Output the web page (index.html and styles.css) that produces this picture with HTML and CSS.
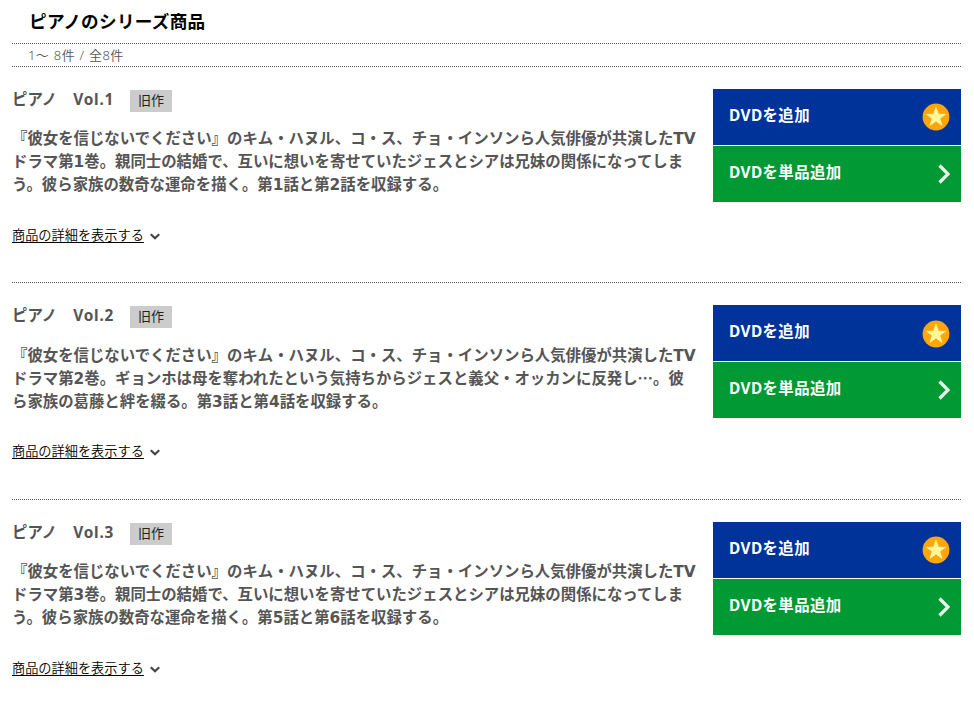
FILE: index.html
```
<!DOCTYPE html>
<html lang="ja">
<head>
    <meta charset="UTF-8">
    <meta name="viewport" content="width=device-width, initial-scale=1.0">
    <title>ピアノのシリーズ商品</title>
    <link rel="stylesheet" href="styles.css">
</head>
<body>
    <!-- shared icons -->
    <svg class="defs" width="0" height="0">
        <symbol id="star" viewBox="0 0 28 28">
            <circle cx="14" cy="14" r="13.4" fill="#ffa60d"/>
            <path d="M14 3.600l2.700 7.200 7.600.1-6 4.700 2.200 7.300-6.500-4.300-6.500 4.300 2.200-7.300-6-4.700 7.600-.1z" fill="#fff799"/>
        </symbol>
        <symbol id="next" viewBox="0 0 12 20">
            <path d="M1.500 1.500L10 10l-8.500 8.500" fill="none" stroke="#e9f6ec" stroke-width="3.200"/>
        </symbol>
        <symbol id="down" viewBox="0 0 10 7">
            <path d="M.8 1.200L5 5.200l4.200-4" fill="none" stroke="#444" stroke-width="2.200"/>
        </symbol>
    </svg>

    <div id="main">
        <h2>ピアノのシリーズ商品</h2>
        <p class="count">1～ 8件 / 全8件</p>

        <div class="item">
            <div class="info">
                <h3><span class="name">ピアノ　<span class="vol">Vol.1</span></span><span class="tag">旧作</span></h3>
                <p class="text">『彼女を信じないでください』のキム・ハヌル、コ・ス、チョ・インソンら人気俳優が共演したTV<br>ドラマ第1巻。親同士の結婚で、互いに想いを寄せていたジェスとシアは兄妹の関係になってしま<br>う。彼ら家族の数奇な運命を描く。第1話と第2話を収録する。</p>
                <p class="more"><a href="#">商品の詳細を表示する</a><svg class="down"><use href="#down"/></svg></p>
            </div>
            <div class="buttons">
                <a href="#" class="add">DVDを追加<svg class="star"><use href="#star"/></svg></a>
                <a href="#" class="single">DVDを単品追加<svg class="next"><use href="#next"/></svg></a>
            </div>
        </div>

        <div class="item">
            <div class="info">
                <h3><span class="name">ピアノ　<span class="vol">Vol.2</span></span><span class="tag">旧作</span></h3>
                <p class="text">『彼女を信じないでください』のキム・ハヌル、コ・ス、チョ・インソンら人気俳優が共演したTV<br>ドラマ第2巻。ギョンホは母を奪われたという気持ちからジェスと義父・オッカンに反発し<span class="dots">…</span>。彼<br>ら家族の葛藤と絆を綴る。第3話と第4話を収録する。</p>
                <p class="more"><a href="#">商品の詳細を表示する</a><svg class="down"><use href="#down"/></svg></p>
            </div>
            <div class="buttons">
                <a href="#" class="add">DVDを追加<svg class="star"><use href="#star"/></svg></a>
                <a href="#" class="single">DVDを単品追加<svg class="next"><use href="#next"/></svg></a>
            </div>
        </div>

        <div class="item">
            <div class="info">
                <h3><span class="name">ピアノ　<span class="vol">Vol.3</span></span><span class="tag">旧作</span></h3>
                <p class="text">『彼女を信じないでください』のキム・ハヌル、コ・ス、チョ・インソンら人気俳優が共演したTV<br>ドラマ第3巻。親同士の結婚で、互いに想いを寄せていたジェスとシアは兄妹の関係になってしま<br>う。彼ら家族の数奇な運命を描く。第5話と第6話を収録する。</p>
                <p class="more"><a href="#">商品の詳細を表示する</a><svg class="down"><use href="#down"/></svg></p>
            </div>
            <div class="buttons">
                <a href="#" class="add">DVDを追加<svg class="star"><use href="#star"/></svg></a>
                <a href="#" class="single">DVDを単品追加<svg class="next"><use href="#next"/></svg></a>
            </div>
        </div>
    </div>
</body>
</html>
```
FILE: styles.css
```
*{
    box-sizing: border-box;
    margin: 0px;
    padding: 0px;
}
body{
    background-color: #fff;
    color: #555;
    font-family: 'DejaVu Sans', 'Noto Sans CJK JP', sans-serif;
}
.defs{
    display: block;
}
#main{
    width: 949px;
    margin-left: 12px;
}
h2{
    height: 43px;
    padding-left: 17px;
    color: #000;
    font-size: 17.6px;
    letter-spacing: 0.3px;
    line-height: 45px;
    white-space: nowrap;
}
.count{
    height: 24px;
    line-height: 22px;
    padding-left: 16px;
    border-top: 1px dotted #555;
    border-bottom: 1px dotted #555;
    font-family: 'Noto Sans', 'Noto Sans CJK JP', sans-serif;
    font-size: 13px;
    font-weight: 350;
    letter-spacing: 0.4px;
    word-spacing: 0.8px;
}
.item{
    display: flex;
    justify-content: space-between;
    height: 216.4px;
    padding-top: 22px;
    border-bottom: 1px dotted #555;
}
.item:last-child{
    border-bottom: none;
}
.info{
    width: 690px;
}
h3{
    display: flex;
    height: 23px;
    line-height: 22px;
    font-size: 15.4px;
}
.name{
    width: 118px;
    white-space: nowrap;
}
.vol{
    margin-left: 1px;
    font-family: 'Noto Sans', sans-serif;
    letter-spacing: 0.8px;
}
.tag{
    width: 42px;
    height: 22px;
    margin-top: 1px;
    background-color: #ccc;
    color: #222;
    font-family: 'Noto Sans CJK JP', sans-serif;
    font-size: 13px;
    font-weight: 400;
    line-height: 20px;
    text-align: center;
}
.text{
    margin-top: 16.3px;
    font-size: 15.4px;
    font-weight: bold;
    line-height: 23px;
    white-space: nowrap;
}
.dots{
    font-family: 'Noto Sans CJK JP', sans-serif;
    line-height: 1;
}
.more{
    display: flex;
    align-items: center;
    height: 20px;
    margin-top: 28.7px;
    font-size: 13.2px;
    font-weight: 350;
    line-height: 20px;
}
.more a{
    color: #000;
    text-underline-offset: 2px;
}
.down{
    width: 10px;
    height: 7px;
    margin: 1px 0 0 6px;
}
.buttons{
    width: 248px;
}
.buttons a{
    display: flex;
    justify-content: space-between;
    height: 56px;
    padding-left: 16px;
    color: #fff;
    font-family: 'Noto Sans', 'Noto Sans CJK JP', sans-serif;
    font-size: 15.4px;
    font-weight: bold;
    letter-spacing: 0.4px;
    line-height: 54.4px;
    text-decoration: none;
}
.buttons .add{
    margin-bottom: 1px;
    background-color: #039;
}
.buttons .single{
    background-color: #093;
}
.star{
    width: 28px;
    height: 28px;
    margin: 14.4px 11px 0 0;
}
.next{
    width: 12px;
    height: 20px;
    margin: 18px 11px 0 0;
}
```
